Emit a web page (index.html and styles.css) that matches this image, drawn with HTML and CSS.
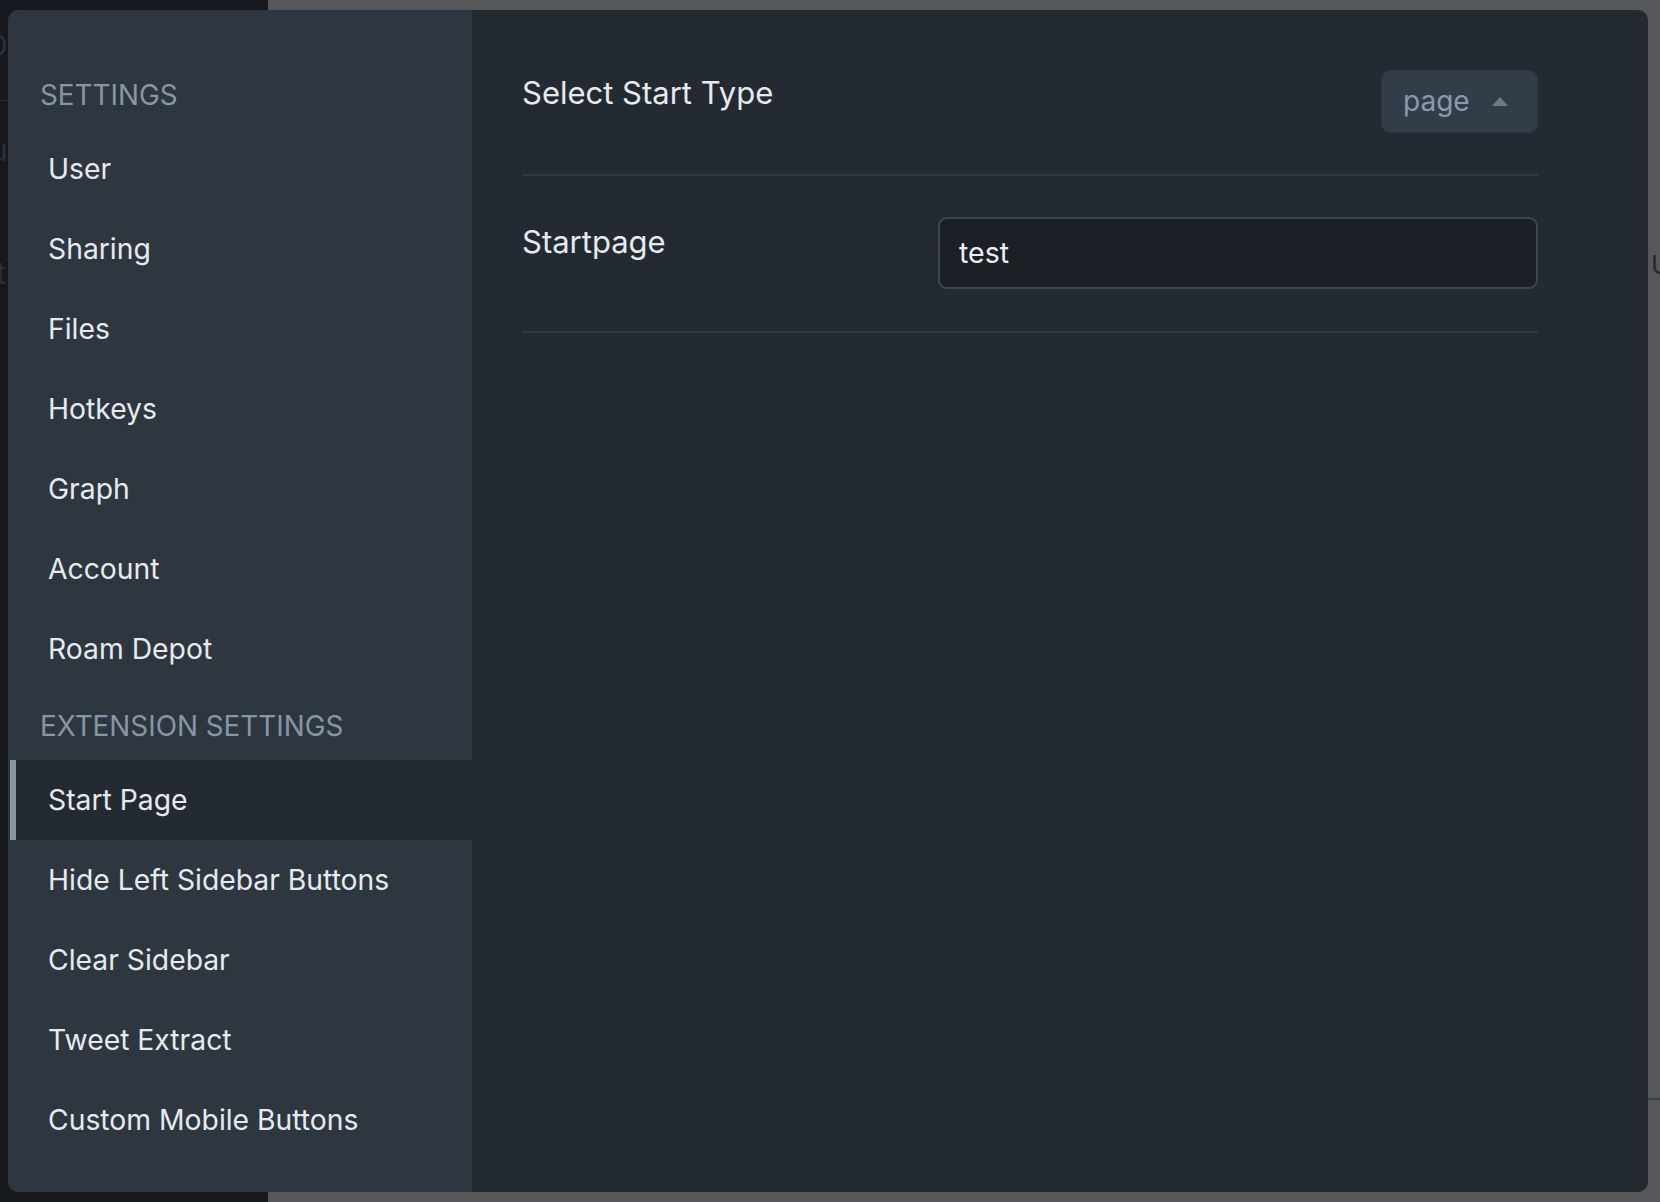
FILE: index.html
```html
<!DOCTYPE html>
<html lang="en">
<head>
<meta charset="utf-8">
<title>Settings</title>
<link rel="stylesheet" href="styles.css">
</head>
<body>
<div class="backdrop">
  <div class="bg-left">
    <div class="ghost g1">D</div>
    <div class="ghost-line"></div>
    <div class="ghost g2">u</div>
    <div class="ghost g3">t</div>
  </div>
  <div class="bg-right">
    <div class="ghost g4">U</div>
    <div class="ghost-line2"></div>
  </div>
</div>

<div class="dialog">
  <nav class="sidebar">
    <div class="side-header">Settings</div>
    <div class="side-item">User</div>
    <div class="side-item">Sharing</div>
    <div class="side-item">Files</div>
    <div class="side-item">Hotkeys</div>
    <div class="side-item">Graph</div>
    <div class="side-item">Account</div>
    <div class="side-item">Roam Depot</div>
    <div class="side-header">Extension Settings</div>
    <div class="side-item active">Start Page</div>
    <div class="side-item">Hide Left Sidebar Buttons</div>
    <div class="side-item">Clear Sidebar</div>
    <div class="side-item">Tweet Extract</div>
    <div class="side-item">Custom Mobile Buttons</div>
  </nav>
  <main class="content">
    <div class="row row-first">
      <div class="label">Select Start Type</div>
      <button class="select-btn" type="button">
        <span>page</span>
        <svg class="caret" width="16" height="9" viewBox="0 0 16 9"><path d="M8 0 L16 9 L0 9 Z" fill="#6c7a88"/></svg>
      </button>
    </div>
    <div class="row row-second">
      <div class="label label-input">Startpage</div>
      <div class="text-input">test</div>
    </div>
  </main>
</div>
</body>
</html>
```
FILE: styles.css
```css
html, body {
  margin: 0;
  padding: 0;
  width: 1660px;
  height: 1202px;
  overflow: hidden;
  font-family: "Inter", "Noto Sans", sans-serif;
}

.backdrop {
  display: flex;
  width: 1660px;
  height: 1202px;
}

.bg-left {
  width: 268px;
  background: #15181c;
  position: relative;
  overflow: hidden;
}

.bg-right {
  flex: 1;
  background: #55575b;
  position: relative;
  overflow: hidden;
}

.ghost {
  position: absolute;
  font-size: 30px;
  color: #2c3138;
  line-height: 1;
}
.g1 { left: -14px; top: 30px; }
.g2 { left: -10px; top: 135px; }
.g3 { left: -4px; top: 258px; }
.g4 { left: 1383px; top: 252px; color: #25292e; font-size: 26px; }

.ghost-line {
  position: absolute;
  left: 0;
  top: 100px;
  width: 20px;
  height: 1px;
  background: #2a2f35;
}
.ghost-line2 {
  position: absolute;
  left: 1380px;
  top: 1098px;
  width: 30px;
  height: 2px;
  background: #3a414b;
}

.dialog {
  position: absolute;
  left: 8px;
  top: 10px;
  width: 1640px;
  height: 1182px;
  border-radius: 10px;
  overflow: hidden;
  display: flex;
  background: #232a32;
}

.sidebar {
  width: 464px;
  flex: none;
  background: #2e3640;
  padding-top: 48px;
  box-sizing: border-box;
}

.side-header {
  height: 71px;
  display: flex;
  align-items: center;
  padding-left: 32px;
  padding-top: 2px;
  box-sizing: border-box;
  font-size: 27.85px;
  text-transform: uppercase;
  color: #8796a4;
}

.side-item {
  height: 80px;
  display: flex;
  align-items: center;
  padding-left: 40px;
  box-sizing: border-box;
  font-size: 28.3px;
  color: #e6eaee;
}

.side-item.active {
  background: #232a32;
  margin-left: 2px;
  border-left: 6px solid #8896a4;
  padding-left: 32px;
}

.content {
  flex: 1;
  padding: 60px 110px 0 50px;
}

.row {
  display: flex;
  justify-content: space-between;
  align-items: flex-start;
  border-bottom: 2px solid #2e3945;
}

.row-first {
  padding-bottom: 41px;
}

.row-second {
  padding-top: 41px;
  padding-bottom: 42px;
}

.label {
  font-size: 31px;
  line-height: 1.5;
  color: #e6eaee;
}

.label-input {
  padding-top: 2px;
}

.select-btn {
  width: 157px;
  height: 63px;
  box-sizing: border-box;
  display: flex;
  align-items: center;
  gap: 22px;
  padding: 0 28px 0 21px;
  background: #323d49;
  border: 1px solid #2b3540;
  border-radius: 9px;
  font-family: inherit;
  font-size: 28px;
  color: #8b99a7;
  cursor: pointer;
}

.select-btn span {
  line-height: 1;
  padding-bottom: 2px;
}

.caret {
  display: block;
}

.text-input {
  width: 600px;
  height: 72px;
  box-sizing: border-box;
  border: 2px solid #3b4755;
  border-radius: 9px;
  background: #1b1f26;
  padding-left: 19px;
  display: flex;
  align-items: center;
  font-size: 28.5px;
  color: #eceff2;
  padding-bottom: 1px;
}
```
